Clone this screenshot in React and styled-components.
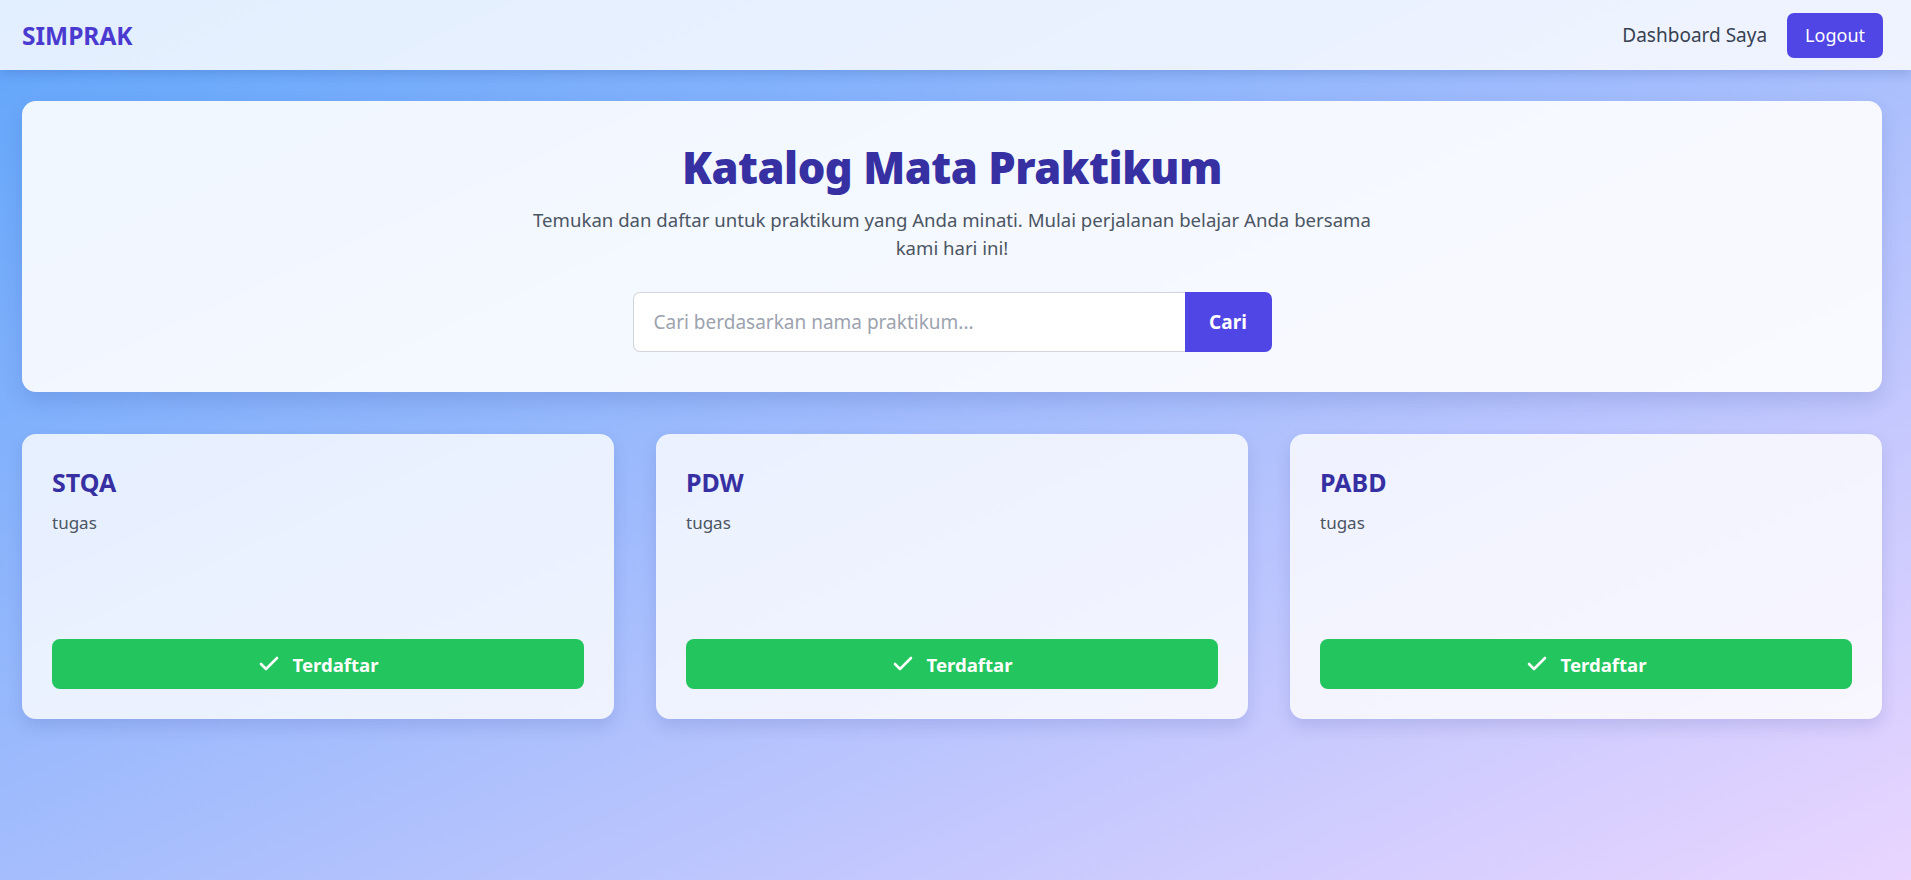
import React from 'react';
import styled, { createGlobalStyle } from 'styled-components';
import { Check } from 'lucide-react';

const GlobalStyle = createGlobalStyle`
  * {
    box-sizing: border-box;
  }
  html, body {
    margin: 0;
    padding: 0;
  }
  body {
    font-family: "Noto Sans", "Open Sans", sans-serif;
    min-height: 880px;
    background: linear-gradient(to bottom right, #60a5fa, #e9d5ff);
  }
`;

const Page = styled.div`
  min-height: 880px;
  display: flex;
  flex-direction: column;
`;

const Navbar = styled.header`
  height: 70px;
  padding: 0 28px 0 22px;
  display: flex;
  align-items: center;
  justify-content: space-between;
  background-color: rgba(255, 255, 255, 0.82);
  box-shadow: 0 4px 10px rgba(30, 60, 140, 0.18);
`;

const Brand = styled.a`
  font-size: 24.5px;
  font-weight: 700;
  color: #4a3ad0;
  text-decoration: none;
`;

const NavRight = styled.nav`
  display: flex;
  align-items: center;
  gap: 20px;
`;

const NavLink = styled.a`
  font-size: 19px;
  color: #374151;
  text-decoration: none;
`;

const LogoutButton = styled.button`
  font-family: inherit;
  font-size: 18px;
  color: #fff;
  background-color: #4f46e5;
  border: none;
  border-radius: 7px;
  height: 45px;
  padding: 0 18px;
  cursor: pointer;
`;

const Main = styled.main`
  padding: 31px 29px 40px 22px;
  display: flex;
  flex-direction: column;
  gap: 42px;
`;

const Hero = styled.section`
  height: 291px;
  padding: 36px 24px 40px;
  display: flex;
  flex-direction: column;
  align-items: center;
  background-color: rgba(255, 255, 255, 0.9);
  border-radius: 14px;
  box-shadow: 0 10px 20px rgba(40, 60, 140, 0.15);
`;

const Title = styled.h1`
  margin: 0;
  font-size: 43.5px;
  line-height: 60px;
  font-weight: 900;
  color: #3730a3;
  letter-spacing: -0.5px;
`;

const Subtitle = styled.p`
  margin: 9px 0 0;
  max-width: 860px;
  text-align: center;
  font-size: 18.6px;
  line-height: 28px;
  color: #4b5563;
`;

const SearchForm = styled.form`
  margin-top: 30px;
  width: 639px;
  height: 61px;
  display: flex;
`;

const SearchInput = styled.input`
  flex: 1;
  min-width: 0;
  height: 100%;
  padding: 0 20px;
  font-family: inherit;
  font-size: 19px;
  color: #111827;
  background: #fff;
  border: 1px solid #d1d5db;
  border-right: none;
  border-radius: 7px 0 0 7px;
  outline: none;

  &::placeholder {
    color: #9ca3af;
  }
`;

const SearchButton = styled.button`
  width: 87px;
  height: 100%;
  font-family: inherit;
  font-size: 19px;
  font-weight: 700;
  color: #fff;
  background-color: #4f46e5;
  border: none;
  border-radius: 0 7px 7px 0;
  cursor: pointer;
`;

const Grid = styled.div`
  display: grid;
  grid-template-columns: repeat(3, 1fr);
  gap: 42px;
`;

const Card = styled.article`
  height: 285px;
  padding: 31px 30px 30px;
  display: flex;
  flex-direction: column;
  background-color: rgba(255, 255, 255, 0.8);
  border-radius: 14px;
  box-shadow: 0 8px 16px rgba(40, 60, 140, 0.14);
`;

const CardTitle = styled.h3`
  margin: 0;
  font-size: 25px;
  line-height: 34px;
  font-weight: 700;
  color: #3730a3;
`;

const CardText = styled.p`
  margin: 12px 0 0;
  font-size: 17px;
  line-height: 24px;
  color: #4b5563;
`;

const RegisteredButton = styled.button`
  margin-top: auto;
  width: 100%;
  height: 50px;
  display: flex;
  align-items: center;
  justify-content: center;
  gap: 11px;
  font-family: inherit;
  font-size: 18.6px;
  font-weight: 700;
  color: #fff;
  background-color: #22c55e;
  border: none;
  border-radius: 8px;
  cursor: default;
`;

const courses = [
  { id: 1, name: 'STQA', desc: 'tugas' },
  { id: 2, name: 'PDW', desc: 'tugas' },
  { id: 3, name: 'PABD', desc: 'tugas' }
];

const App = () => {
  return (
    <Page>
      <GlobalStyle />
      <Navbar>
        <Brand href="#">SIMPRAK</Brand>
        <NavRight>
          <NavLink href="#">Dashboard Saya</NavLink>
          <LogoutButton>Logout</LogoutButton>
        </NavRight>
      </Navbar>
      <Main>
        <Hero>
          <Title>Katalog Mata Praktikum</Title>
          <Subtitle>
            Temukan dan daftar untuk praktikum yang Anda minati. Mulai
            perjalanan belajar Anda bersama kami hari ini!
          </Subtitle>
          <SearchForm onSubmit={e => e.preventDefault()}>
            <SearchInput placeholder="Cari berdasarkan nama praktikum..." />
            <SearchButton type="submit">Cari</SearchButton>
          </SearchForm>
        </Hero>
        <Grid>
          {courses.map(course => (
            <Card key={course.id}>
              <CardTitle>{course.name}</CardTitle>
              <CardText>{course.desc}</CardText>
              <RegisteredButton>
                <Check size={24} strokeWidth={2.6} />
                Terdaftar
              </RegisteredButton>
            </Card>
          ))}
        </Grid>
      </Main>
    </Page>
  );
};

export default App;
